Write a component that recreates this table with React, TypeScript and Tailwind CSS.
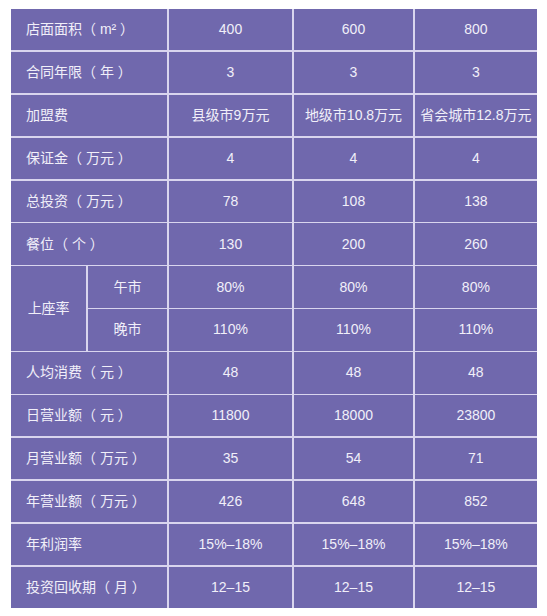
import React from 'react';

const font = { fontFamily: '"Liberation Sans", "Noto Sans CJK SC", sans-serif' };

type Row = { label: string; values: string[] };

const topRows: Row[] = [
    { label: '店面面积（ m² ）', values: ['400', '600', '800'] },
    { label: '合同年限（ 年 ）', values: ['3', '3', '3'] },
    { label: '加盟费', values: ['县级市9万元', '地级市10.8万元', '省会城市12.8万元'] },
    { label: '保证金（ 万元 ）', values: ['4', '4', '4'] },
    { label: '总投资（ 万元 ）', values: ['78', '108', '138'] },
    { label: '餐位（ 个 ）', values: ['130', '200', '260'] },
];

const bottomRows: Row[] = [
    { label: '人均消费（ 元 ）', values: ['48', '48', '48'] },
    { label: '日营业额（ 元 ）', values: ['11800', '18000', '23800'] },
    { label: '月营业额（ 万元 ）', values: ['35', '54', '71'] },
    { label: '年营业额（ 万元 ）', values: ['426', '648', '852'] },
    { label: '年利润率', values: ['15%–18%', '15%–18%', '15%–18%'] },
    { label: '投资回收期（ 月 ）', values: ['12–15', '12–15', '12–15'] },
];

const cell = 'bg-[#7068ad] flex items-center justify-center whitespace-nowrap';

function DataRow({ row }: { row: Row }) {
    return (
        <>
            <div className={`${cell} col-span-2 !justify-start pl-[15px]`}>{row.label}</div>
            {row.values.map((v, i) => (
                <div key={i} className={cell}>
                    {v}
                </div>
            ))}
        </>
    );
}

export default function App() {
    return (
        <div className="w-[547px] h-[616px] bg-white pt-[9px] pl-[11px]" style={font}>
            <div className="grid w-[526px] h-[599px] gap-[1.5px] bg-[#d9d5ee] grid-cols-[75.25px_79.5px_123.5px_119.5px_122.25px] grid-rows-[repeat(14,1fr)] text-[14px] text-[#f1eff9]">
                {topRows.map((r) => (
                    <DataRow key={r.label} row={r} />
                ))}

                <div className={`${cell} row-span-2`}>上座率</div>
                <div className={cell}>午市</div>
                <div className={cell}>80%</div>
                <div className={cell}>80%</div>
                <div className={cell}>80%</div>
                <div className={cell}>晚市</div>
                <div className={cell}>110%</div>
                <div className={cell}>110%</div>
                <div className={cell}>110%</div>

                {bottomRows.map((r) => (
                    <DataRow key={r.label} row={r} />
                ))}
            </div>
        </div>
    );
}
